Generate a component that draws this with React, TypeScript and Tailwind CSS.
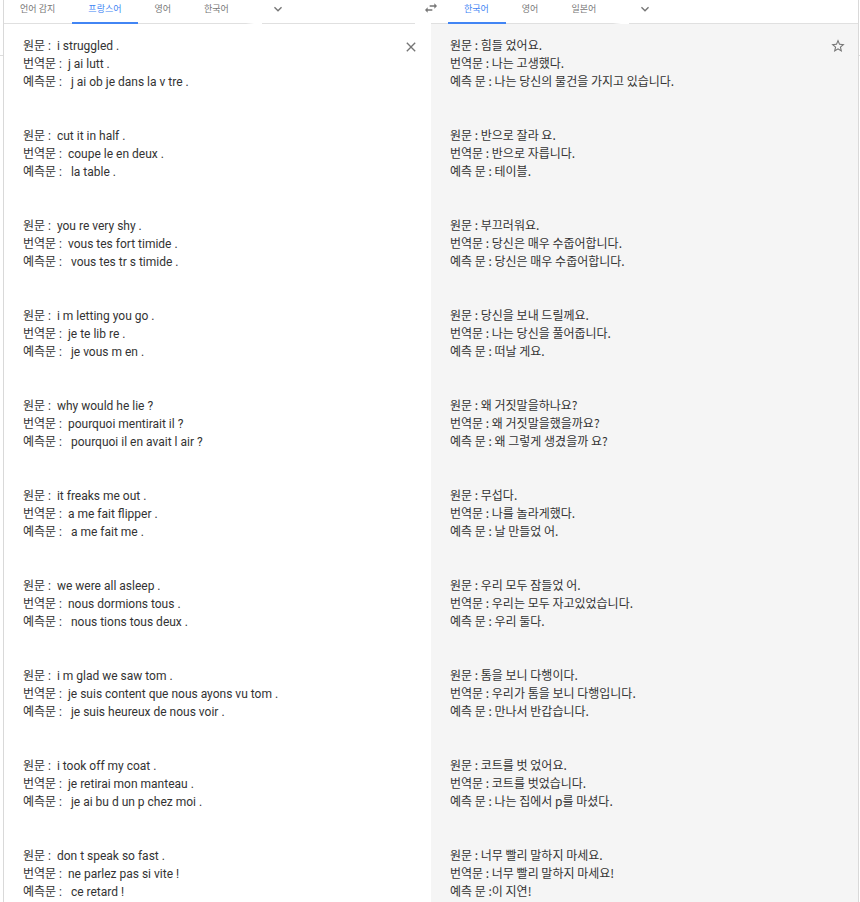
import { MdClose, MdExpandMore, MdStarBorder, MdSwapHoriz } from "react-icons/md";

const sourceText = `원문 :  i struggled .
번역문 :  j ai lutt .
예측문 :   j ai ob je dans la v tre .


원문 :  cut it in half .
번역문 :  coupe le en deux .
예측문 :   la table .


원문 :  you re very shy .
번역문 :  vous tes fort timide .
예측문 :   vous tes tr s timide .


원문 :  i m letting you go .
번역문 :  je te lib re .
예측문 :   je vous m en .


원문 :  why would he lie ?
번역문 :  pourquoi mentirait il ?
예측문 :   pourquoi il en avait l air ?


원문 :  it freaks me out .
번역문 :  a me fait flipper .
예측문 :   a me fait me .


원문 :  we were all asleep .
번역문 :  nous dormions tous .
예측문 :   nous tions tous deux .


원문 :  i m glad we saw tom .
번역문 :  je suis content que nous ayons vu tom .
예측문 :   je suis heureux de nous voir .


원문 :  i took off my coat .
번역문 :  je retirai mon manteau .
예측문 :   je ai bu d un p chez moi .


원문 :  don t speak so fast .
번역문 :  ne parlez pas si vite !
예측문 :   ce retard !`;

const translations = [
  ["원문 : 힘들 었어요.", "번역문 : 나는 고생했다.", "예측 문 : 나는 당신의 물건을 가지고 있습니다."],
  ["원문 : 반으로 잘라 요.", "번역문 : 반으로 자릅니다.", "예측 문 : 테이블."],
  ["원문 : 부끄러워요.", "번역문 : 당신은 매우 수줍어합니다.", "예측 문 : 당신은 매우 수줍어합니다."],
  ["원문 : 당신을 보내 드릴께요.", "번역문 : 나는 당신을 풀어줍니다.", "예측 문 : 떠날 게요."],
  ["원문 : 왜 거짓말을하나요?", "번역문 : 왜 거짓말을했을까요?", "예측 문 : 왜 그렇게 생겼을까 요?"],
  ["원문 : 무섭다.", "번역문 : 나를 놀라게했다.", "예측 문 : 날 만들었 어."],
  ["원문 : 우리 모두 잠들었 어.", "번역문 : 우리는 모두 자고있었습니다.", "예측 문 : 우리 둘다."],
  ["원문 : 톰을 보니 다행이다.", "번역문 : 우리가 톰을 보니 다행입니다.", "예측 문 : 만나서 반갑습니다."],
  ["원문 : 코트를 벗 었어요.", "번역문 : 코트를 벗었습니다.", "예측 문 : 나는 집에서 p를 마셨다."],
  ["원문 : 너무 빨리 말하지 마세요.", "번역문 : 너무 빨리 말하지 마세요!", "예측 문 :이 지연!"],
];

function LanguageTabs({ tabs, active }: { tabs: string[]; active: string }) {
  return (
    <div className="flex">
      {tabs.map((tab) => (
        <button
          key={tab}
          type="button"
          aria-pressed={tab === active}
          className={
            tab === active
              ? "h-6 border-b-2 border-[#4285f4] pr-[17px] pb-1 pl-4 leading-[18px] whitespace-nowrap text-[#4285f4]"
              : "h-6 border-b border-[#e0e0e0] pr-[17px] pb-[5px] pl-4 leading-[18px] whitespace-nowrap text-[#777777]"
          }
        >
          {tab}
        </button>
      ))}
      <div className="mt-auto h-px w-2 bg-linear-to-r from-[#e0e0e0] to-transparent" />
    </div>
  );
}

function MoreLanguages({ label }: { label: string }) {
  return (
    <div className="ml-2 flex h-6 flex-1 border-b border-[#e0e0e0] pl-2">
      <button type="button" aria-label={label} className="h-[18px] text-[#757575]">
        <MdExpandMore size={16} />
      </button>
    </div>
  );
}

export default function App() {
  return (
    <div className="flex min-h-screen bg-white font-['Roboto','Noto_Sans_CJK_KR',sans-serif] text-xs leading-[18px] text-[#333333]">
      <div className="h-14 w-[3px] shrink-0 border-b border-[#dddddd]" />
      <main className="grid min-w-0 flex-1 grid-cols-2 grid-rows-[24px_1fr] border-x border-[#d9d9d9]">
        <div className="flex min-w-0 text-[9px]">
          <LanguageTabs tabs={["언어 감지", "프랑스어", "영어", "한국어"]} active="프랑스어" />
          <MoreLanguages label="원본 언어 더보기" />
          <div className="-mr-2 flex w-6 justify-end">
            <button type="button" aria-label="언어 전환" className="h-4 text-[#757575]">
              <MdSwapHoriz size={16} />
            </button>
          </div>
        </div>
        <div className="flex min-w-0 text-[9px]">
          <div className="w-[17px] shrink-0 border-b border-[#e0e0e0]" />
          <LanguageTabs tabs={["한국어", "영어", "일본어"]} active="한국어" />
          <MoreLanguages label="번역 언어 더보기" />
        </div>
        <section className="flex items-start pt-[13px] pr-3">
          <textarea
            aria-label="원본 텍스트"
            rows={48}
            spellCheck={false}
            defaultValue={sourceText}
            className="block min-w-0 flex-1 resize-none overflow-hidden pl-[19px] outline-none"
          />
          <button type="button" aria-label="원본 텍스트 지우기" className="mt-0.5 text-[#757575]">
            <MdClose size={16} />
          </button>
        </section>
        <section className="flex items-start justify-between bg-[#f5f5f5] pt-3 pr-3 pl-[19px] font-['Noto_Sans_CJK_KR',sans-serif]">
          <div className="space-y-9">
            {translations.map((lines) => (
              <div key={lines[0]}>
                {lines.map((line) => (
                  <p key={line}>{line}</p>
                ))}
              </div>
            ))}
          </div>
          <button type="button" aria-label="번역 저장" className="mt-0.5 text-[#757575]">
            <MdStarBorder size={16} />
          </button>
        </section>
      </main>
      <div className="h-14 w-px shrink-0 border-b border-[#dddddd]" />
    </div>
  );
}
